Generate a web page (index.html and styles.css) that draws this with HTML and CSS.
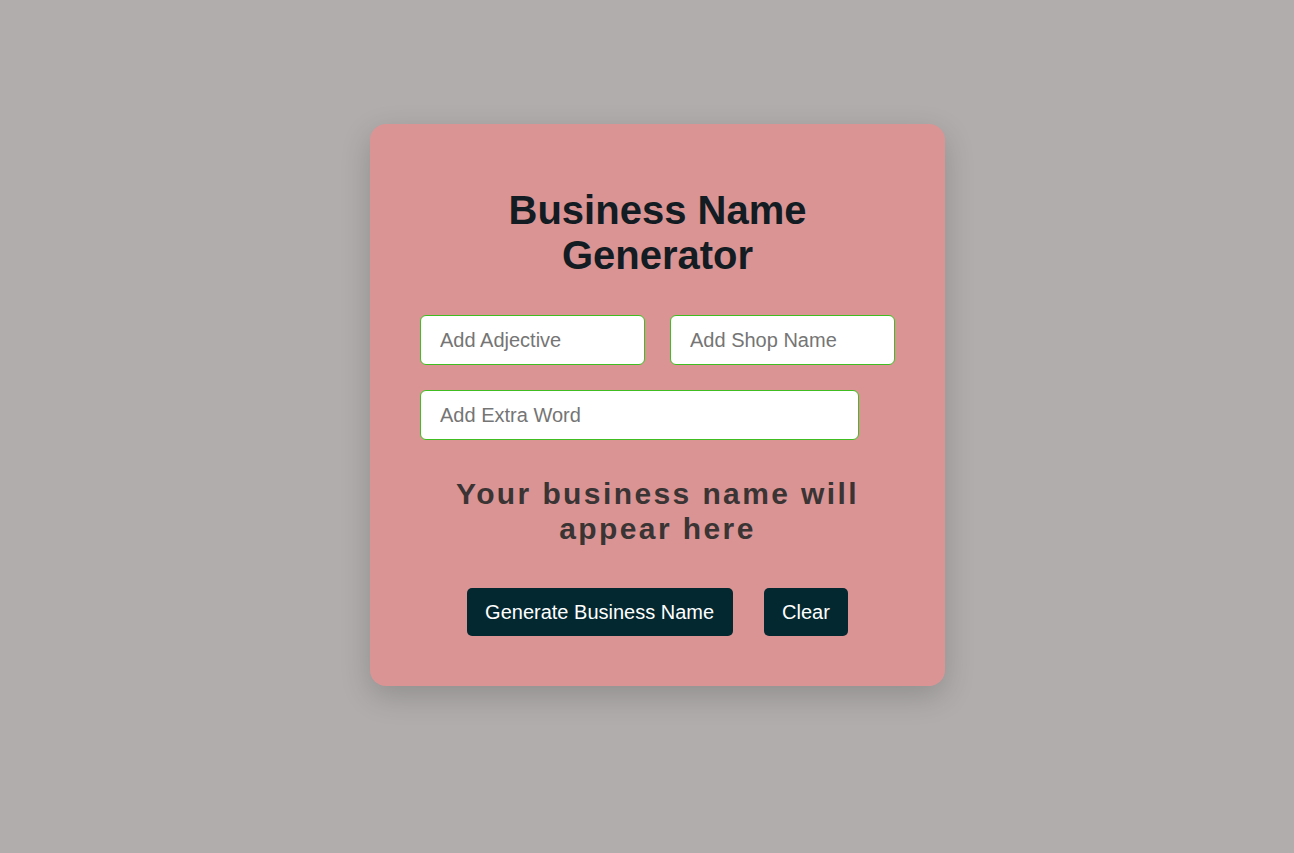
FILE: index.html
```html
<!DOCTYPE html>
<html lang="en">
<head>
<meta charset="utf-8">
<title>Business Name Generator</title>
<link rel="stylesheet" href="styles.css">
</head>
<body>
<main class="page">
  <section class="card">
    <h1 class="title">Business Name Generator</h1>
    <div class="fields">
      <input class="field" type="text" placeholder="Add Adjective">
      <input class="field" type="text" placeholder="Add Shop Name">
      <input class="field field-wide" type="text" placeholder="Add Extra Word">
    </div>
    <p class="output">Your business name will appear here</p>
    <div class="actions">
      <button class="btn" type="button">Generate Business Name</button>
      <button class="btn" type="button">Clear</button>
    </div>
  </section>
</main>
</body>
</html>
```
FILE: styles.css
```css
* { box-sizing: border-box; }
html, body {
  margin: 0;
  padding: 0;
  height: 100%;
}
body {
  background: #b1adad;
  font-family: "Liberation Sans", Arial, sans-serif;
}
.page {
  display: flex;
  justify-content: center;
  padding: 124px 0 0 21px;
}
.card {
  width: 575px;
  background: #db9494;
  border-radius: 16px;
  padding: 64px 50px 50px;
  box-shadow: 0 10px 30px rgba(0, 0, 0, 0.18);
  display: flex;
  flex-direction: column;
  align-items: center;
}
.title {
  margin: 0;
  font-size: 40px;
  font-weight: 700;
  color: #121c22;
  text-align: center;
  line-height: 45px;
}
.fields {
  margin-top: 37px;
  width: 100%;
  display: flex;
  flex-wrap: wrap;
  gap: 25px;
}
.field {
  width: 225px;
  height: 50px;
  border: 1px solid #40bd20;
  border-radius: 6px;
  background: #fff;
  padding: 0 19px;
  font-family: "Liberation Sans", Arial, sans-serif;
  font-size: 20px;
  color: #222;
  outline: none;
}
.field::placeholder { color: #757575; }
.field-wide { width: 439px; }
.output {
  margin: 36px 0 0;
  width: 420px;
  text-align: center;
  font-size: 30px;
  font-weight: 700;
  letter-spacing: 0.08em;
  line-height: 35px;
  color: #3a3434;
}
.actions {
  margin-top: 42px;
  display: flex;
  gap: 31px;
  justify-content: center;
}
.btn {
  height: 48px;
  padding: 0 18.5px;
  border: none;
  border-radius: 5px;
  background: #032830;
  color: #fff;
  font-family: "Liberation Sans", Arial, sans-serif;
  font-size: 20px;
  cursor: pointer;
}
```
